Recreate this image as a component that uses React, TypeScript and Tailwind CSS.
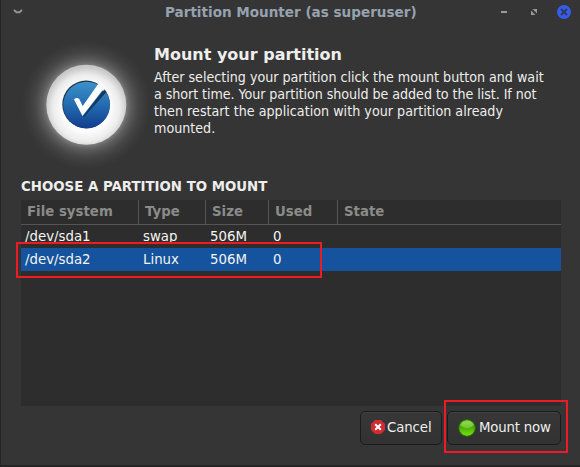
import React from "react";

const dejavu = "font-['DejaVu_Sans',sans-serif]";
const condensed = "font-['DejaVu_Sans_Condensed','DejaVu_Sans',sans-serif]";

function TitleBar() {
  return (
    <header className="relative flex h-6 items-center justify-between pl-[13px] pr-[9px]">
      <svg width="10" height="6" viewBox="0 0 10 6" className="block">
        <path d="M1 1 3.5 3.3H6.5L9 1" fill="none" stroke="#929292" strokeWidth="2" />
      </svg>
      <h1 className={`${dejavu} absolute left-[165px] top-[4px] whitespace-nowrap text-[13.55px] leading-4 font-bold text-[#96a2b0]`}>
        Partition Mounter (as superuser)
      </h1>
      <svg width="72" height="16" viewBox="0 0 72 16" className="block">
        <rect x="2" y="7" width="6" height="2" fill="#999" />
        <path d="M33.5 5h4.5v4.5zM32 6.5v4.5h4.5z" fill="#999" />
        <circle cx="65" cy="8" r="7" fill="#355df0" />
        <path d="M62 5l6 6M68 5l-6 6" stroke="#343953" strokeWidth="2" />
      </svg>
    </header>
  );
}

function Emblem() {
  return (
    <svg width="132" height="140" viewBox="0 0 132 140" className="block shrink-0">
      <defs>
        <radialGradient id="glow" gradientUnits="userSpaceOnUse" cx="65.3" cy="70" r="65">
          <stop offset=".58" stopColor="#aaa" stopOpacity=".75" />
          <stop offset=".68" stopColor="#888" stopOpacity=".5" />
          <stop offset=".8" stopColor="#777" stopOpacity=".25" />
          <stop offset="1" stopColor="#555" stopOpacity="0" />
        </radialGradient>
        <radialGradient id="pearl" cx=".5" cy=".54" r=".51">
          <stop offset=".6" stopColor="#fbfbfb" />
          <stop offset=".82" stopColor="#ececec" />
          <stop offset="1" stopColor="#c9c9c9" />
        </radialGradient>
        <linearGradient id="blue" x1="0" y1="0" x2="0" y2="1">
          <stop stopColor="#3b92cb" />
          <stop offset=".5" stopColor="#236bb0" />
          <stop offset="1" stopColor="#123c8c" />
        </linearGradient>
      </defs>
      <circle cx="65.3" cy="70" r="65" fill="url(#glow)" />
      <circle cx="65.3" cy="69.8" r="40" fill="url(#pearl)" />
      <circle cx="65.1" cy="69.4" r="23.8" fill="#20364b" />
      <circle cx="65.6" cy="70.1" r="23.3" fill="url(#blue)" />
      <path d="M62 81.5 82.5 55l3 2L63 82z" fill="#15385f" />
      <path d="M53 64.5C54.5 62.5 57.5 62.5 58.5 64.5L61.7 71 77.5 48.5 83.5 52.5 61.5 81Z" fill="#fff" />
      <path d="M76 51 79 46 86 52 82 56Z" fill="#f8f8f8" />
    </svg>
  );
}

const rows = [
  { fs: "/dev/sda1", type: "swap", size: "506M", used: "0" },
  { fs: "/dev/sda2", type: "Linux", size: "506M", used: "0", selected: true },
];

const columns = "grid grid-cols-[118px_67px_63px_69px_1fr]";

function PartitionTable() {
  return (
    <section className={`${dejavu} relative ml-[21px] h-[206px] w-[540px] bg-[#2d2d2d] text-[13.33px]`}>
      <div className={`${columns} h-[25px] border-b border-[#555] font-bold text-[#8b8b89]`}>
        {["File system", "Type", "Size", "Used", "State"].map((name) => (
          <div key={name} className="border-r border-[#555] pl-1.5 leading-[23px] whitespace-nowrap last:border-r-0">
            {name}
          </div>
        ))}
      </div>
      {rows.map((r) => (
        <div key={r.fs} className={`${columns} h-[23px] leading-[23px] text-[#f4f4f1] ${r.selected ? "bg-[#15539e]" : ""}`}>
          <span className="pl-1">{r.fs}</span>
          <span className="pl-1">{r.type}</span>
          <span className="pl-1">{r.size}</span>
          <span className="pl-1">{r.used}</span>
        </div>
      ))}
      <div className="absolute -left-[5px] top-[42px] h-9 w-[306px] border-2 border-[#ed1c24]" />
    </section>
  );
}

const button =
  "flex h-[34px] items-center rounded-[5px] border border-[#1b1b1b] bg-linear-to-b from-[#373737] to-[#323232] text-[13.33px] text-[#eeeeec] whitespace-nowrap shadow-[inset_0_1px_#414141]";

export default function App() {
  return (
    <div className="h-[467px] w-[580px] overflow-hidden border-b-2 border-l border-[#242424] bg-[#353535]">
      <div className="-ml-px">
        <TitleBar />
        <main>
          <div className="flex h-[153px] pl-[21px] pt-[11px]">
            <Emblem />
            <div className="w-[410px] pl-px pt-[10px] text-[#eeeeec]">
              <h2 className={`${dejavu} text-[16px] leading-5 font-bold`}>Mount your partition</h2>
              <p className={`${condensed} mt-[4px] text-[14.13px] leading-[17px] font-stretch-condensed whitespace-nowrap`}>
                After selecting your partition click the mount button and wait
                <br />
                <span className="tracking-[-0.05px]">a short time. Your partition should be added to the list. If not</span>
                <br />
                <span className="tracking-[0.03px]">then restart the application with your partition already</span>
                <br />
                mounted.
              </p>
            </div>
          </div>
          <h3 className={`${dejavu} h-[23px] pl-[21px] text-[13.33px] leading-[19px] font-bold whitespace-nowrap text-[#eeeeec]`}>
            CHOOSE A PARTITION TO MOUNT
          </h3>
          <PartitionTable />
          <footer className={`${dejavu} flex gap-[5px] pl-[360px] pt-[5px]`}>
            <button className={`${button} w-[82px] pl-[9px]`}>
              <svg width="16" height="16" viewBox="0 0 16 16" className="mb-[2px] block shrink-0">
                <path d="M5 1h6l4 4v6l-4 4H5l-4-4V5z" fill="#cf2b30" />
                <path d="m5.2 5.2 5.6 5.6m0-5.6-5.6 5.6" stroke="#fff" strokeWidth="2" />
              </svg>
              <span className="ml-px tracking-[-0.1px]">Cancel</span>
            </button>
            <div className="relative">
              <button className={`${button} w-[114px] pl-[10px]`}>
                <svg width="18" height="18" viewBox="0 0 18 18" className="mr-[3px] block shrink-0">
                  <defs>
                    <linearGradient id="green" x1="0" y1="0" x2="0" y2="1">
                      <stop stopColor="#82d83c" />
                      <stop offset=".45" stopColor="#4cac07" />
                      <stop offset="1" stopColor="#77e511" />
                    </linearGradient>
                  </defs>
                  <circle cx="9" cy="9" r="8.3" fill="url(#green)" stroke="#286b09" />
                  <ellipse cx="9" cy="5.5" rx="6" ry="3.4" fill="#a4e36e" opacity=".5" />
                </svg>
                <span className="tracking-[-0.2px]">Mount now</span>
              </button>
              <div className="absolute -left-[3px] -top-[11px] h-[53px] w-[124px] border-2 border-[#ed1c24]" />
            </div>
          </footer>
        </main>
      </div>
    </div>
  );
}
